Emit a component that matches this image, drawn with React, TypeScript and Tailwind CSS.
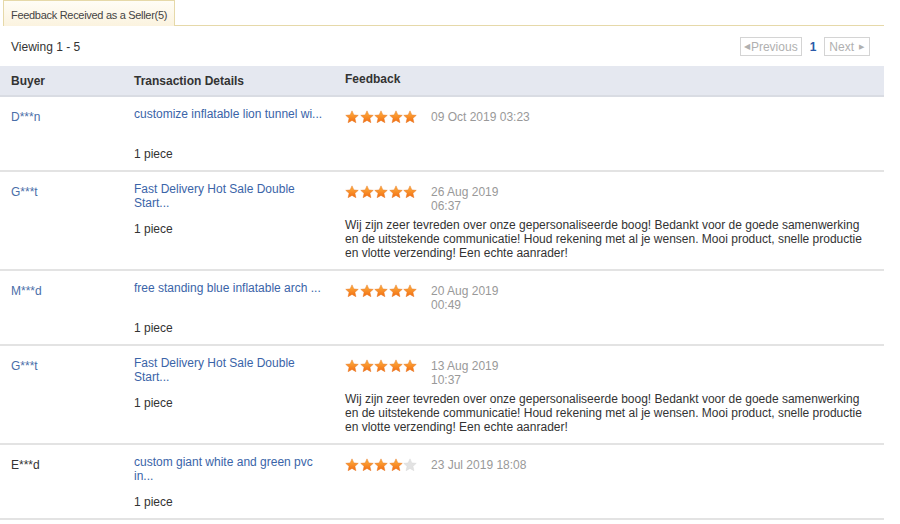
import React from "react";

type Row = {
  buyer: string;
  buyerLink: boolean;
  title: string[];
  stars: number;
  date: string[];
  comment?: string;
};

const comment =
  "Wij zijn zeer tevreden over onze gepersonaliseerde boog! Bedankt voor de goede samenwerking en de uitstekende communicatie! Houd rekening met al je wensen. Mooi product, snelle productie en vlotte verzending! Een echte aanrader!";

const rows: Row[] = [
  { buyer: "D***n", buyerLink: true, title: ["customize inflatable lion tunnel wi..."], stars: 5, date: ["09 Oct 2019 03:23"] },
  { buyer: "G***t", buyerLink: true, title: ["Fast Delivery Hot Sale Double", "Start..."], stars: 5, date: ["26 Aug 2019", "06:37"], comment },
  { buyer: "M***d", buyerLink: true, title: ["free standing blue inflatable arch ..."], stars: 5, date: ["20 Aug 2019", "00:49"] },
  { buyer: "G***t", buyerLink: true, title: ["Fast Delivery Hot Sale Double", "Start..."], stars: 5, date: ["13 Aug 2019", "10:37"], comment },
  { buyer: "E***d", buyerLink: false, title: ["custom giant white and green pvc", "in..."], stars: 4, date: ["23 Jul 2019 18:08"] },
];

function Star({ on, id }: { on: boolean; id: string }) {
  return (
    <svg width="14" height="14" viewBox="0 0 24 24">
      <defs>
        <linearGradient id={id} x1="0" y1="0" x2="0" y2="1">
          <stop offset="0" stopColor="#ffb340" />
          <stop offset="1" stopColor="#f26c12" />
        </linearGradient>
      </defs>
      <path
        d="M12 1.5l3.2 7 7.5.7-5.7 5 1.7 7.5L12 17.8l-6.7 3.9 1.7-7.5-5.7-5 7.5-.7z"
        fill={on ? `url(#${id})` : "#e2e2e2"}
        stroke={on ? "#e5731a" : "#d6d6d6"}
        strokeWidth="0.8"
      />
    </svg>
  );
}

function Stars({ n, row }: { n: number; row: number }) {
  return (
    <div className="flex w-[74px] shrink-0 gap-[0.5px]">
      {[0, 1, 2, 3, 4].map((i) => (
        <Star key={i} on={i < n} id={`g${row}-${i}`} />
      ))}
    </div>
  );
}

export default function App() {
  return (
    <div className="w-[900px] bg-white text-[12px] leading-[14px] text-[#333] [font-family:'Liberation_Sans',Arial,sans-serif]">
      <div className="ml-[3px] mr-[16px] flex">
        <div className="h-[26px] border-x border-t border-[#e6d9a9] bg-gradient-to-b from-[#fffdf6] to-[#fbf3df] px-[7px] pt-[7px] text-[11px] tracking-[-0.3px] text-[#444]">
          Feedback Received as a Seller(5)
        </div>
        <div className="flex-1 border-b border-[#e6d9a9]" />
      </div>

      <div className="mr-[16px] flex h-[40px] items-center justify-between pl-[11px] pt-[1px]">
        <span>Viewing 1 - 5</span>
        <div className="flex items-center gap-[6px] pr-[14px] text-[12px]">
          <span className="flex h-[19px] items-center border border-[#d4d4d4] px-[3px] text-[#b0b0b0]">
            <span className="mr-[1px] text-[8px]">◀</span>Previous
          </span>
          <span className="px-[2px] font-bold text-[#2a5aa8]">1</span>
          <span className="flex h-[19px] items-center border border-[#d4d4d4] pl-[4px] pr-[5px] text-[#b0b0b0]">
            Next<span className="ml-[5px] text-[7px]">▶</span>
          </span>
        </div>
      </div>

      <div className="mr-[16px]">
        <div className="flex h-[31px] items-center border-b-2 border-[#d9dce3] bg-[#e5e8f0] font-bold text-[#333]">
          <div className="w-[134px] pl-[11px]">Buyer</div>
          <div className="w-[211px]">Transaction Details</div>
          <div className="-mt-[3px]">Feedback</div>
        </div>

        {rows.map((r, i) => (
          <div key={i} className="flex border-b-2 border-[#e3e3e3] pb-[9px] pt-[10px]">
            <div className={`w-[134px] pl-[11px] pt-[3px] ${r.buyerLink ? "text-[#4a6ea8]" : "text-[#333]"}`}>
              {r.buyer}
            </div>
            <div className="w-[211px] pr-[10px]">
              <div className="h-[28px] text-[#3a64a8]">
                {r.title.map((t, j) => (
                  <div key={j}>{t}</div>
                ))}
              </div>
              <div className="mt-[12px] text-[#333]">1 piece</div>
            </div>
            <div className="flex-1 pr-[10px] pt-[3px]">
              <div className="flex">
                <Stars n={r.stars} row={i} />
                <div className="ml-[12px] text-[#999]">
                  {r.date.map((d, j) => (
                    <div key={j}>{d}</div>
                  ))}
                </div>
              </div>
              {r.comment && <p className="mt-[5px] text-[#333]">{r.comment}</p>}
            </div>
          </div>
        ))}
      </div>
    </div>
  );
}
